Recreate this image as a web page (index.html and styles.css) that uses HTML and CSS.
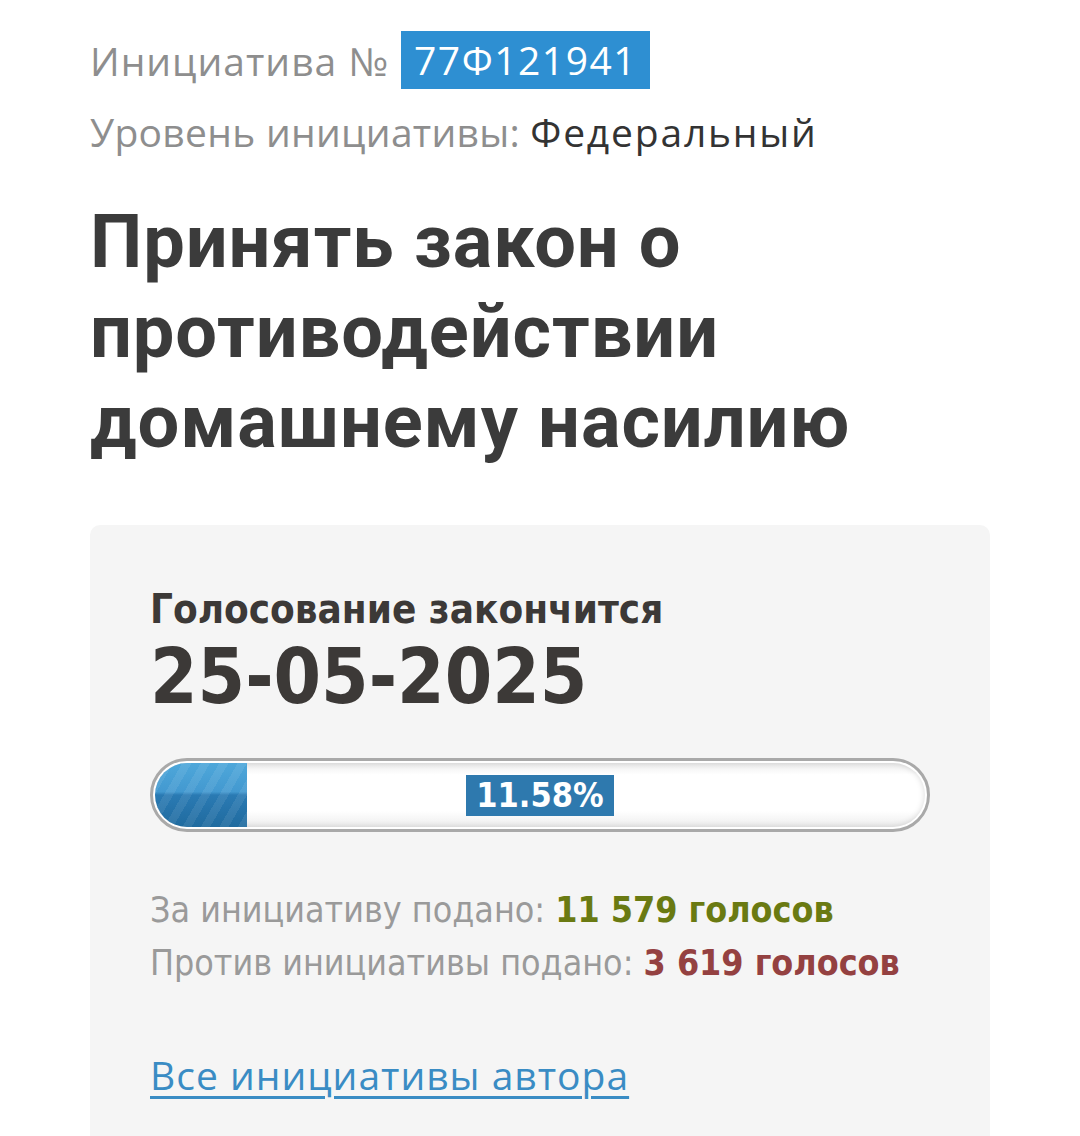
FILE: index.html
```html
<!DOCTYPE html>
<html lang="ru">
<head>
<meta charset="utf-8">
<link rel="stylesheet" href="styles.css">
</head>
<body>
<div class="page">
  <div class="num-row">
    <span class="label label-num">Инициатива №</span>
    <span class="num">77Ф121941</span>
  </div>
  <div class="level-row">
    <span class="label label-level">Уровень инициативы:</span>
    <span class="level">Федеральный</span>
  </div>
  <h1 class="title">Принять закон о противодействии домашнему насилию</h1>

  <div class="card">
    <div class="ends">Голосование закончится</div>
    <div class="date">25-05-2025</div>
    <div class="bar">
      <div class="bar-inner">
        <div class="fill" style="width: 11.9%"></div>
        <span class="pct">11.58%</span>
      </div>
    </div>
    <div class="stats">
      <div>За инициативу подано: <b class="yes">11 579 голосов</b></div>
      <div>Против инициативы подано: <b class="no">3 619 голосов</b></div>
    </div>
    <a class="author" href="#">Все инициативы автора</a>
  </div>
</div>
</body>
</html>
```

FILE: styles.css
```css
html, body {
  margin: 0;
  padding: 0;
  background: #ffffff;
}
body {
  font-family: "Open Sans", "Noto Sans", sans-serif;
}
.page {
  padding: 31px 90px 0 90px;
  overflow: hidden;
  height: 1105px;
}
.num-row {
  display: flex;
  align-items: center;
  height: 58px;
  font-size: 39px;
}
.label {
  color: #8e8e8e;
}
.label-num {
  letter-spacing: 1px;
}
.label-level {
  letter-spacing: 0.3px;
}
.num {
  margin-left: 12px;
  background: #2e8fd2;
  color: #ffffff;
  height: 58px;
  line-height: 58px;
  padding: 0 13px;
  letter-spacing: 1.5px;
}
.level-row {
  margin-top: 18px;
  font-size: 39px;
  line-height: 50px;
}
.level {
  color: #333333;
  letter-spacing: 1.8px;
}
.title {
  margin: 40px 0 0 0;
  font-family: "Roboto", "Open Sans", sans-serif;
  font-size: 74px;
  line-height: 90px;
  font-weight: 700;
  color: #3b3b3b;
  letter-spacing: 0.9px;
  width: 820px;
}
.card {
  margin-top: 58px;
  background: #f5f5f5;
  border-radius: 10px;
  padding: 60px 60px 60px 60px;
  height: 700px;
}
.ends {
  font-family: "Liberation Sans Narrow", "DejaVu Sans Condensed", "Roboto", sans-serif;
  font-stretch: condensed;
  font-weight: 700;
  font-size: 40px;
  line-height: 48px;
  color: #3c3937;
}
.date {
  font-family: "Liberation Sans Narrow", "DejaVu Sans Condensed", "Roboto", sans-serif;
  font-stretch: condensed;
  font-weight: 700;
  font-size: 76px;
  line-height: 80px;
  color: #3c3937;
  margin-top: 4px;
}
.bar {
  margin-top: 41px;
  width: 770px;
  height: 64px;
  border: 3px solid #a9a9a9;
  border-radius: 40px;
  background: #ffffff;
  padding: 2px;
}
.bar-inner {
  position: relative;
  height: 100%;
  border-radius: 34px;
  overflow: hidden;
  background: linear-gradient(to bottom, #ececec 0%, #ffffff 18%, #ffffff 75%, #ededed 100%);
  box-shadow: inset 0 0 6px rgba(0,0,0,0.15);
  display: flex;
  align-items: center;
  justify-content: center;
}
.fill {
  position: absolute;
  left: 0;
  top: 0;
  bottom: 0;
  background:
    repeating-linear-gradient(-60deg, rgba(255,255,255,0.08) 0 8px, rgba(255,255,255,0) 8px 16px),
    linear-gradient(to bottom, #4ea7da 0%, #4399d0 45%, #2a7ab3 50%, #206b9f 100%);
}
.pct {
  position: relative;
  font-family: "Liberation Sans Narrow", "DejaVu Sans Condensed", "Roboto", sans-serif;
  font-stretch: condensed;
  font-weight: 700;
  font-size: 34px;
  line-height: 41px;
  color: #ffffff;
  background: #2e79ae;
  padding: 0 10px;
}
.stats {
  margin-top: 51px;
  font-family: "Liberation Sans Narrow", "DejaVu Sans Condensed", "Roboto", sans-serif;
  font-stretch: condensed;
  font-size: 35.5px;
  line-height: 53px;
  color: #9a9a9a;
}
.yes {
  color: #6a7a12;
}
.no {
  color: #944141;
}
.author {
  display: inline-block;
  margin-top: 59px;
  font-size: 39px;
  color: #3a8cc4;
  text-decoration: underline;
  text-decoration-thickness: 3px;
  text-underline-offset: 6px;
  letter-spacing: 1px;
}
```
